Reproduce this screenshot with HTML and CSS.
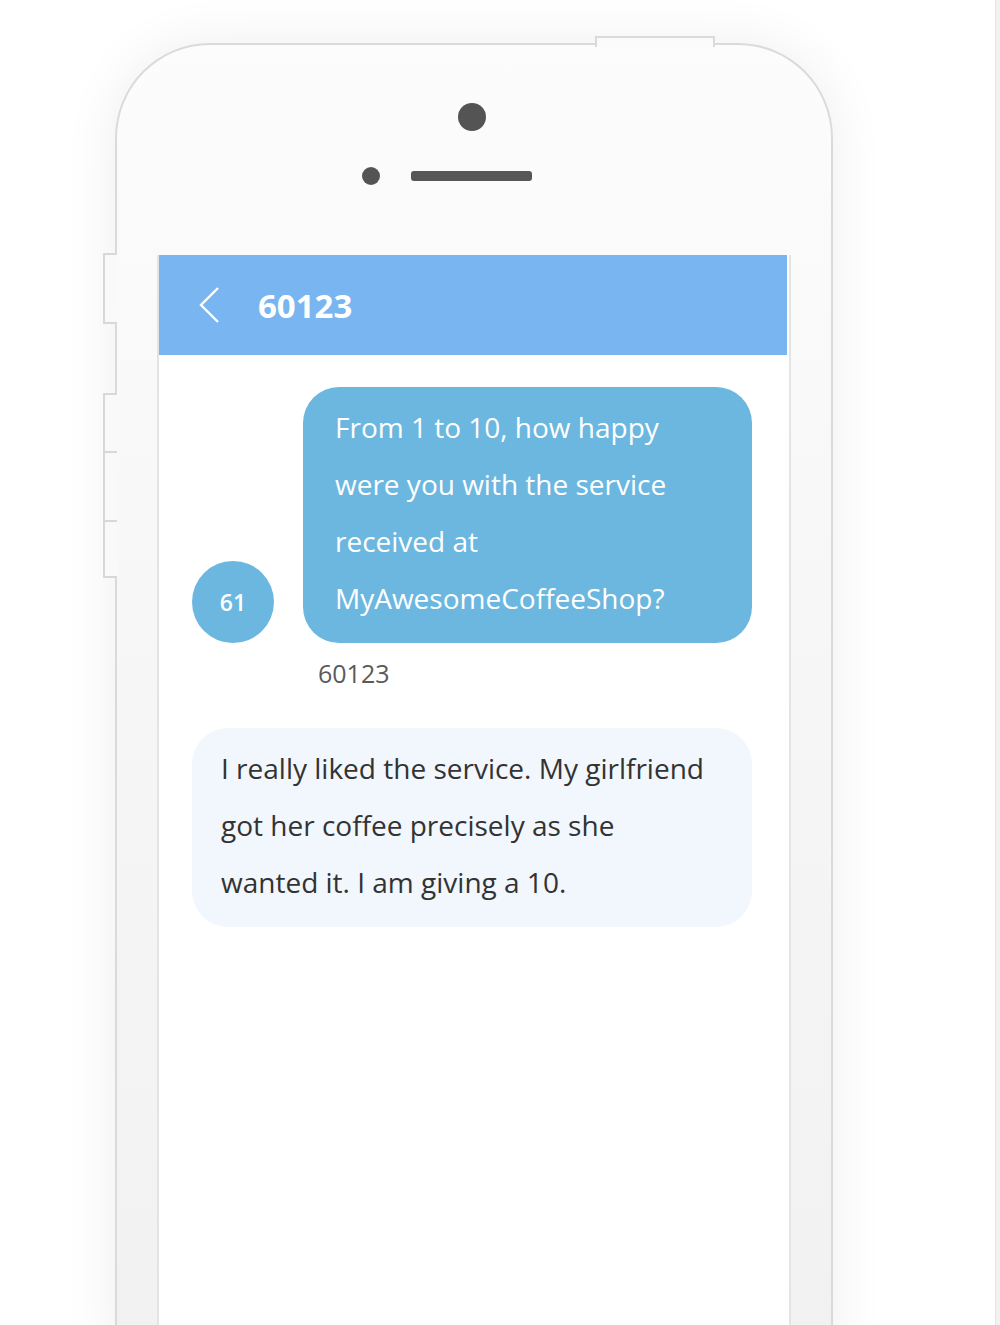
FILE: index.html
```html
<!DOCTYPE html>
<html lang="en">
<head>
    <meta charset="UTF-8">
    <meta name="viewport" content="width=device-width, initial-scale=1.0">
    <title>60123 - Messages</title>
    <link rel="stylesheet" href="styles.css">
</head>
<body>
    <div class="stage">
        <div class="phone">
            <div class="power-key"></div>
            <div class="side-key key-mute"></div>
            <div class="side-key key-up"></div>
            <div class="side-key key-down"></div>
            <div class="side-key key-extra"></div>

            <div class="phone-top">
                <div class="camera"></div>
                <div class="speaker-row">
                    <span class="sensor"></span>
                    <span class="speaker"></span>
                </div>
            </div>

            <div class="screen">
                <div class="chat-header">
                    <svg class="back-icon" width="20" height="36" viewBox="0 0 20 36">
                        <path d="M19 1 L2 18 L19 35" fill="none" stroke="#fff" stroke-width="2.4"/>
                    </svg>
                    <h1 class="chat-title">60123</h1>
                </div>

                <div class="messages">
                    <div class="message-row">
                        <div class="avatar">61</div>
                        <div class="message-col">
                            <div class="bubble bubble-in">From 1 to 10, how happy were you with the service received at MyAwesomeCoffeeShop?</div>
                        </div>
                    </div>
                    <div class="sender">60123</div>

                    <div class="bubble bubble-out">I really liked the service. My girlfriend got her coffee precisely as she wanted it. I am giving a 10.</div>
                </div>
            </div>
        </div>
    </div>
    <div class="scroll-edge"></div>
</body>
</html>
```

FILE: styles.css
```css
body {
    margin: 0;
    padding: 0;
    height: 1325px;
    overflow: hidden;
    display: flex;
    background-color: #fff;
    font-family: "Open Sans", Arial, sans-serif;
}

.stage {
    flex: 1;
    padding-left: 115px;
    padding-top: 43px;
}

.scroll-edge {
    width: 4px;
    background-color: #f2f2f2;
    border-left: 1px solid #e6e6e6;
}

/* phone body */
.phone {
    position: relative;
    box-sizing: border-box;
    width: 718px;
    height: 1320px;
    padding: 0 40px;
    display: flex;
    flex-direction: column;
    border: 2px solid #dadada;
    border-bottom: none;
    border-radius: 95px 95px 0 0;
    background: linear-gradient(to bottom, #fcfcfc 0%, #f5f5f5 60%, #f1f1f1 100%);
    box-shadow: 0 0 55px rgba(0, 0, 0, 0.07);
}

.power-key {
    position: absolute;
    top: -9px;
    left: 478px;
    box-sizing: border-box;
    width: 120px;
    height: 11px;
    border: 2px solid #dadada;
    border-bottom: none;
    background-color: #fbfbfb;
}

.side-key {
    position: absolute;
    left: -14px;
    box-sizing: border-box;
    width: 14px;
    border: 2px solid #d8d8d8;
    border-right: none;
    background-color: #f9f9f9;
}

.key-mute {
    top: 208px;
    height: 71px;
}

.key-up {
    top: 348px;
    height: 60px;
}

.key-down {
    top: 406px;
    height: 71px;
}

.key-extra {
    top: 475px;
    height: 58px;
}

.phone-top {
    display: flex;
    flex-direction: column;
    align-items: center;
    padding-top: 58px;
    height: 152px;
}

.camera {
    width: 28px;
    height: 28px;
    margin-right: 4px;
    border-radius: 50%;
    background-color: #545454;
}

.speaker-row {
    align-self: stretch;
    display: flex;
    align-items: center;
    justify-content: center;
    gap: 31px;
    margin-top: 36px;
    padding-right: 54px;
    height: 18px;
}

.sensor {
    width: 18px;
    height: 18px;
    border-radius: 50%;
    background-color: #545454;
}

.speaker {
    width: 121px;
    height: 10px;
    border-radius: 3px;
    background-color: #565656;
}

/* screen */
.screen {
    flex: 1;
    border-left: 2px solid #e4e4e4;
    border-right: 2px solid #e4e4e4;
    background-color: #fff;
}

.chat-header {
    display: flex;
    align-items: center;
    gap: 39px;
    height: 100px;
    margin-right: 2px;
    padding-left: 40px;
    background-color: #79b5f0;
}

.chat-title {
    margin: 0;
    color: #fff;
    font-size: 33px;
    font-weight: 700;
}

.messages {
    padding: 32px 37px 0 33px;
}

.message-row {
    display: flex;
    align-items: flex-end;
    gap: 29px;
}

.avatar {
    flex: none;
    display: flex;
    align-items: center;
    justify-content: center;
    width: 82px;
    height: 82px;
    border-radius: 50%;
    background-color: #6cb7df;
    color: #fff;
    font-size: 23px;
    font-weight: 600;
}

.message-col {
    flex: 1;
}

.bubble {
    font-size: 28px;
    line-height: 57px;
    border-radius: 36px;
}

.bubble-in {
    padding: 12px 30px 16px 32px;
    background-color: #6cb7df;
    color: #fff;
}

.sender {
    margin: 15px 0 0 126px;
    color: #5a5a5a;
    font-size: 25px;
    line-height: 30px;
}

.bubble-out {
    margin-top: 40px;
    padding: 12px 36px 16px 29px;
    background-color: #f1f7fc;
    color: #333;
}
```
